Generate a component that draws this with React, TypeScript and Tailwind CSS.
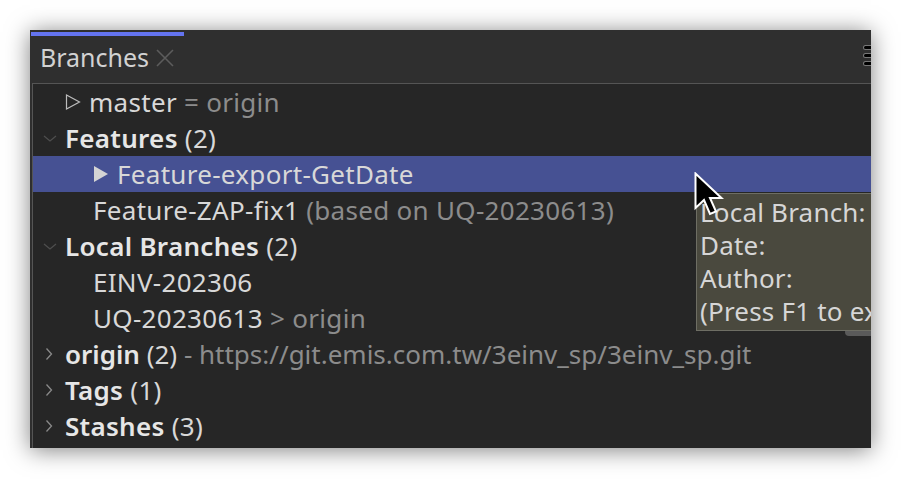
import React from 'react';

type Part = { text: string; tone?: 'bold' | 'dim' | 'normal' };

interface Row {
  id: string;
  icon: 'down' | 'right' | 'outline' | 'filled' | null;
  iconLeft: number;
  textLeft: number;
  parts: Part[];
  selected?: boolean;
  tight?: boolean;
}

const rows: Row[] = [
  { id: 'master', icon: 'outline', iconLeft: 32, textLeft: 56, parts: [{ text: 'master' }, { text: ' = origin', tone: 'dim' }] },
  { id: 'features', icon: 'down', iconLeft: 10, textLeft: 32, parts: [{ text: 'Features', tone: 'bold' }, { text: ' (2)' }] },
  { id: 'export', icon: 'filled', iconLeft: 60, textLeft: 84, parts: [{ text: 'Feature-export-GetDate' }], selected: true },
  { id: 'zap', icon: null, iconLeft: 0, textLeft: 60, parts: [{ text: 'Feature-ZAP-fix1' }, { text: ' (based on UQ-20230613)', tone: 'dim' }] },
  { id: 'local', icon: 'down', iconLeft: 10, textLeft: 32, parts: [{ text: 'Local Branches', tone: 'bold' }, { text: ' (2)' }] },
  { id: 'einv', icon: null, iconLeft: 0, textLeft: 60, parts: [{ text: 'EINV-202306' }] },
  { id: 'uq', icon: null, iconLeft: 0, textLeft: 60, parts: [{ text: 'UQ-20230613' }, { text: ' > origin', tone: 'dim' }] },
  {
    id: 'origin',
    icon: 'right',
    iconLeft: 12,
    textLeft: 32,
    tight: true,
    parts: [{ text: 'origin', tone: 'bold' }, { text: ' (2)' }, { text: ' - https://git.emis.com.tw/3einv_sp/3einv_sp.git', tone: 'dim' }],
  },
  { id: 'tags', icon: 'right', iconLeft: 12, textLeft: 32, parts: [{ text: 'Tags', tone: 'bold' }, { text: ' (1)' }] },
  { id: 'stashes', icon: 'right', iconLeft: 12, textLeft: 32, parts: [{ text: 'Stashes', tone: 'bold' }, { text: ' (3)' }] },
];

const toneClass = {
  bold: 'font-semibold text-[#e6e6e6]',
  dim: 'text-[#8c8c8c]',
  normal: 'text-[#d8d8d8]',
};

const RowIcon: React.FC<{ kind: Row['icon'] }> = ({ kind }) => {
  if (kind === 'down')
    return (
      <svg width="14" height="10" viewBox="0 0 14 10">
        <path d="M1 3 L7 8 L13 3" fill="none" stroke="#4e4e4e" strokeWidth="1.3" />
      </svg>
    );
  if (kind === 'right')
    return (
      <svg width="8" height="14" viewBox="0 0 8 14">
        <path d="M1.5 1.5 L6.5 7 L1.5 12.5" fill="none" stroke="#8a8a8a" strokeWidth="1.3" />
      </svg>
    );
  if (kind === 'outline')
    return (
      <svg width="16" height="16" viewBox="0 0 16 16">
        <path d="M1.5 1 L14.5 8 L1.5 15 Z" fill="none" stroke="#bdbdbd" strokeWidth="1.2" />
      </svg>
    );
  if (kind === 'filled')
    return (
      <svg width="16" height="18" viewBox="0 0 16 18">
        <path d="M1 1 L15 9 L1 17 Z" fill="#d4d4d4" />
      </svg>
    );
  return null;
};

const Cursor: React.FC = () => (
  <svg width="32" height="46" viewBox="0 0 32 46" className="absolute left-[664px] top-[142px]">
    <path
      d="M1.5 1.5 L1.5 36 L10 28 L16 42 L22 39.5 L16 26 L27.5 26 Z"
      fill="#000"
      stroke="#fff"
      strokeWidth="2"
      strokeLinejoin="miter"
    />
  </svg>
);

export default function App() {
  return (
    <div className="h-[479px] w-[901px] bg-white pl-[30px] pt-[30px] font-['Noto_Sans',sans-serif]">
      <div className="relative flex h-[418px] w-[841px] flex-col overflow-hidden bg-[#2f2f2f] shadow-[0_2px_22px_rgba(0,0,0,0.5)]">
        {/* header */}
        <div className="relative flex h-[53px] shrink-0 flex-col">
          <div className="ml-px mt-[2px] h-[4px] w-[153px] bg-[#6474f0]" />
          <div className="flex items-center pl-[10px] pt-[6px]">
            <span className="text-[25px] leading-[30px] text-[#d2d2d2]">Branches</span>
            <svg width="20" height="20" viewBox="0 0 20 20" className="ml-[6px] mt-[2px]">
              <path d="M2 2 L18 18 M18 2 L2 18" stroke="#5c5c5c" strokeWidth="1.6" />
            </svg>
          </div>
          <div className="absolute right-0 top-[16px] flex flex-col gap-[5px]">
            <div className="h-[3px] w-[7px] rounded-l-sm bg-black ring-1 ring-[#777]" />
            <div className="h-[3px] w-[7px] rounded-l-sm bg-black ring-1 ring-[#777]" />
            <div className="h-[3px] w-[7px] rounded-l-sm bg-black ring-1 ring-[#777]" />
          </div>
        </div>

        {/* tree */}
        <div className="ml-[2px] flex flex-1 flex-col border-l border-t border-[#555] bg-[#262626]">
          {rows.map((row) => (
            <div
              key={row.id}
              className={`relative flex h-[36px] shrink-0 items-center whitespace-nowrap text-[26px] ${
                row.tight ? 'tracking-normal' : 'tracking-[0.3px]'
              } ${row.selected ? 'bg-[#465193]' : ''}`}
            >
              {row.icon && (
                <span className="absolute top-1/2 flex -translate-y-1/2 items-center" style={{ left: row.iconLeft }}>
                  <RowIcon kind={row.icon} />
                </span>
              )}
              <span className="leading-[35px]" style={{ paddingLeft: row.textLeft }}>
                {row.parts.map((p, i) => (
                  <span key={i} className={toneClass[p.tone ?? 'normal']}>
                    {p.text}
                  </span>
                ))}
              </span>
            </div>
          ))}
        </div>

        {/* tooltip */}
        <div className="absolute left-[815px] top-[298px] h-[8px] w-[40px] rounded-[6px] bg-[#5a5a5a]" />
        <div className="absolute left-[666px] top-[163px] w-[220px] whitespace-nowrap border border-[#6e6e64] bg-[#4a493e] px-[3px] py-[2px] text-[26px] leading-[33px] tracking-[0.2px] text-[#d6d6d6]">
          <div>Local Branch:</div>
          <div>Date:</div>
          <div>Author:</div>
          <div>(Press F1 to expand)</div>
        </div>
        <Cursor />
      </div>
    </div>
  );
}
